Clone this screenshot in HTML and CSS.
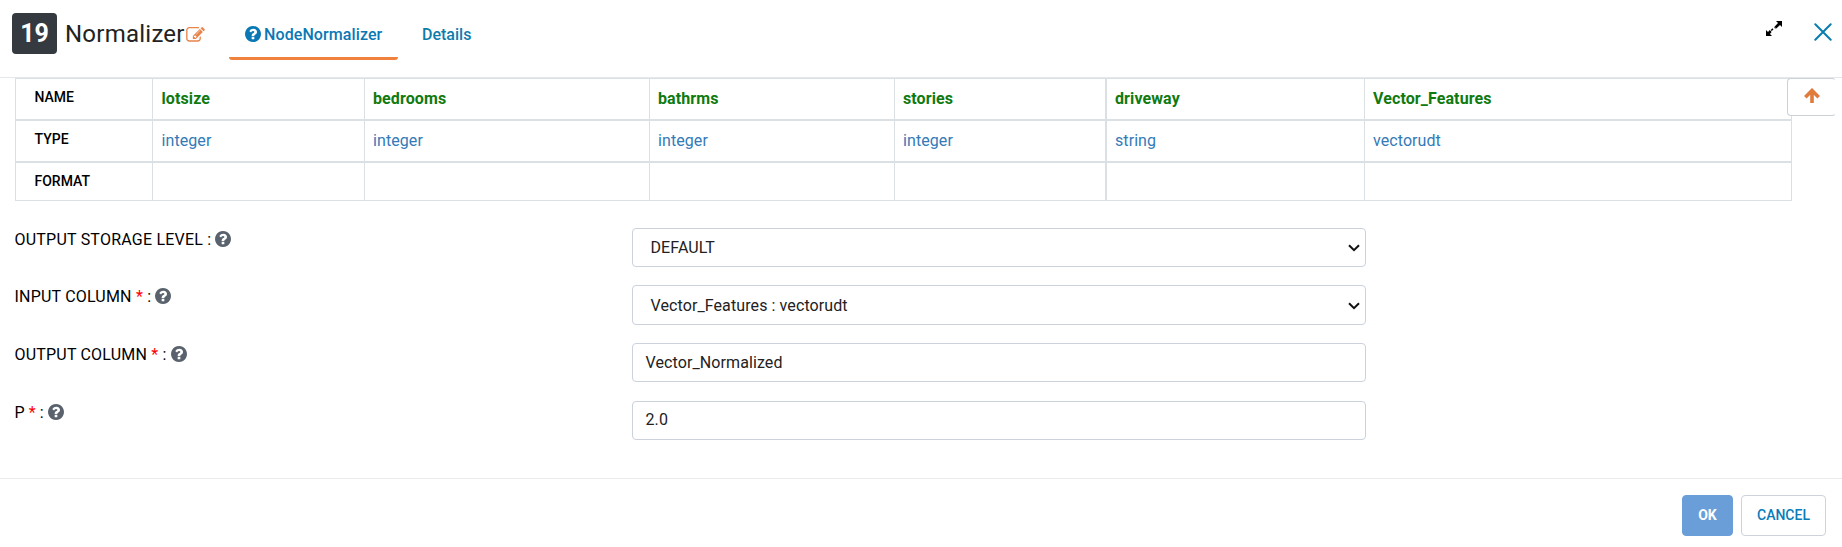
FILE: index.html
```html
<!DOCTYPE html>
<html lang="en">
<head>
<meta charset="utf-8">
<title>Normalizer</title>
<link rel="stylesheet" href="styles.css">
</head>
<body>
<svg class="defs" width="0" height="0" aria-hidden="true">
  <symbol id="help" viewBox="0 0 1536 1536"><path d="M896 1248v-192q0-14-9-23t-23-9H672q-14 0-23 9t-9 23v192q0 14 9 23t23 9h192q14 0 23-9t9-23zm256-672q0-88-55.500-163t-138.500-116-170-41q-243 0-371 213-15 24 8 42l132 100q7 6 19 6 16 0 25-12 53-68 86-92 34-24 86-24 48 0 85.500 26t37.500 59q0 38-20 61t-68 45q-63 28-115.500 86.500T640 892v36q0 14 9 23t23 9h192q14 0 23-9t9-23q0-19 21.500-49.500T972 829q32-18 49-28.500t46-35 44.500-48 28-60.500 12.500-81zm384 192q0 209-103 385.500T1153.500 1433 768 1536t-385.500-103T103 1153.500 0 768t103-385.500T382.500 103 768 0t385.500 103T1433 382.500 1536 768z"/></symbol>
</svg>
<header class="header">
  <span class="badge">19</span>
  <h1 class="title">Normalizer</h1>
  <svg class="edit" viewBox="0 0 1792 1536"><path d="M888 1056l116-116-152-152-116 116v56h96v96h56zm440-720q-16-16-33 1L945 687q-17 17-1 33t33-1l350-350q17-17 1-33zm80 594v190q0 119-84.500 203.500T1120 1408H288q-119 0-203.500-84.500T0 1120V288Q0 169 84.500 84.500T288 0h832q63 0 117 25 15 7 18 23 3 17-9 29l-49 49q-14 14-32 8-23-6-45-6H288q-66 0-113 47t-47 113v832q0 66 47 113t113 47h832q66 0 113-47t47-113V994q0-13 9-22l64-64q15-15 35-7t20 29zm-96-738l288 288-672 672H640V864zm444 132l-92 92-288-288 92-92q28-28 68-28t68 28l152 152q28 28 28 68t-28 68z"/></svg>
  <nav class="tabs">
    <a class="tab active"><svg class="help"><use href="#help"/></svg>NodeNormalizer</a>
    <a class="tab details">Details</a>
  </nav>
  <div class="tools">
    <svg class="expand" viewBox="0 0 16 15"><path d="M10 0h6v6l-2-2-3.700 3.500-1.800-1.800L12 2zM0 9l2 2 1.800-1.900 1.800 1.800L4 13l2 2H0z"/><path class="dash" d="M9.300 6.700 8.700 7.200M5.200 9.500 7 7.900"/></svg>
    <svg class="close" viewBox="0 0 18 18"><path d="M1.300 1.300 16.700 16.700M16.700 1.300 1.300 16.700"/></svg>
  </div>
</header>
<main class="body">
  <section class="schema">
    <div class="row">
      <div class="head">NAME</div><div class="name">lotsize</div><div class="name">bedrooms</div><div class="name">bathrms</div><div class="name">stories</div><div class="name wide">driveway</div><div class="name">Vector_Features</div>
    </div>
    <div class="row">
      <div class="head">TYPE</div><div class="type">integer</div><div class="type">integer</div><div class="type">integer</div><div class="type">integer</div><div class="type wide">string</div><div class="type">vectorudt</div>
    </div>
    <div class="row">
      <div class="head">FORMAT</div><div></div><div></div><div></div><div></div><div class="wide"></div><div></div>
    </div>
    <div class="up"><svg viewBox="0 0 16 15"><path d="M1.300 9.200 8 2.500l6.700 6.700M8 3v12"/></svg></div>
  </section>
  <section class="form">
    <div class="label first">OUTPUT STORAGE LEVEL :<svg class="help"><use href="#help"/></svg></div>
    <div class="control select">DEFAULT<svg class="chevron" viewBox="0 0 12 8"><path d="M1 1.200 6 6.200l5-5"/></svg></div>
    <div class="label">INPUT COLUMN <i>*</i> :<svg class="help"><use href="#help"/></svg></div>
    <div class="control select tall">Vector_Features : vectorudt<svg class="chevron" viewBox="0 0 12 8"><path d="M1 1.200 6 6.200l5-5"/></svg></div>
    <div class="label">OUTPUT COLUMN <i>*</i> :<svg class="help"><use href="#help"/></svg></div>
    <div class="control text">Vector_Normalized</div>
    <div class="label short">P <i>*</i> :<svg class="help"><use href="#help"/></svg></div>
    <div class="control">2.0</div>
  </section>
</main>
<footer class="footer">
  <div class="btn ok">OK</div>
  <div class="btn cancel">CANCEL</div>
</footer>
</body>
</html>
```
FILE: styles.css
```css
* { box-sizing: border-box; }
body {
  margin: 0;
  height: 547px;
  overflow: hidden;
  background: #fff;
  color: #222;
  font: 16px/24px Roboto, sans-serif;
  display: flex;
  flex-direction: column;
}
.defs { display: none; }
.header {
  height: 78px;
  flex: none;
  display: flex;
  align-items: flex-start;
  padding: 13px 10px 0 12px;
  border-bottom: 1px solid #e5e8eb;
}
.badge {
  width: 45px;
  height: 41px;
  border-radius: 4px;
  background: #343a40;
  color: #fff;
  font-size: 25px;
  font-weight: 700;
  line-height: 41px;
  text-align: center;
}
.title {
  margin: 0 0 0 8px;
  width: 121px;
  font-size: 24px;
  font-weight: 400;
  line-height: 42px;
  letter-spacing: 0.24px;
}
.edit { width: 19px; height: 16px; margin-top: 14px; fill: #e8834a; }
.tabs { display: flex; margin-left: 24px; }
.tab {
  display: flex;
  align-items: center;
  height: 47px;
  padding-bottom: 3px;
  color: #0a78b5;
  font-weight: 500;
}
.active {
  width: 169px;
  padding: 0 0 0 16px;
  border-bottom: 3px solid #f0813c;
  border-radius: 0 0 3px 3px;
  letter-spacing: 0.1px;
}
.details { margin-left: 24px; color: #0e7cab; }
.help { width: 16px; height: 16px; flex: none; fill: #5a636d; }
.tab .help { margin-right: 3px; margin-bottom: 2px; fill: #0a78b5; }
.tools { display: flex; margin-left: auto; }
.expand { width: 16px; height: 15px; margin: 8px 32px 0 0; }
.dash { stroke: #000; stroke-width: 1.500; }
.close { width: 18px; height: 18px; margin-top: 10px; fill: none; stroke: #0a7cb0; stroke-width: 2; stroke-linecap: round; }
.body { flex: 1; }
.schema { position: relative; width: 1777px; margin-left: 15px; border: 1px solid #dbe0e5; }
.row {
  display: grid;
  grid-template-columns: 136px 212px 285px 245px 211px 259px 1fr;
  height: 42px;
  border-bottom: 2px solid #dbe0e5;
}
.row:nth-child(3) { height: 37px; border: 0; }
.row > div { border-left: 1px solid #dbe0e5; padding: 8px 0 0 8px; }
.row > div:nth-child(2) { padding-left: 8.500px; }
.row > .head { border: 0; padding: 6px 0 0 18.500px; font-size: 14px; font-weight: 500; color: #000; }
.row > .wide { border-left-width: 2px; }
.row > .name { color: #0f7a0f; font-weight: 700; letter-spacing: 0.1px; }
.row > .type { color: #337ab7; letter-spacing: 0.08px; }
.up {
  position: absolute;
  left: 1771px;
  top: -1px;
  width: 49px;
  height: 38px;
  padding: 9px 0 0 16px;
  border: 1px solid #ccd2d8;
  border-right-color: transparent;
  border-radius: 4px;
  background: #fff;
}
.up svg { display: block; width: 16px; height: 15px; fill: none; stroke: #e07b3e; stroke-width: 3.600; }
.form {
  display: grid;
  grid-template-columns: 617px 734px;
  grid-template-rows: 57px 58px 58px 58px;
  padding: 27px 0 0 15px;
}
.label { display: flex; align-items: flex-start; height: 24px; margin-left: -0.500px; white-space: pre; color: #000; letter-spacing: 0.2px; }
.first { letter-spacing: 0.22px; }
.short { letter-spacing: 0.1px; }
.label i { color: #f00; font-style: normal; }
.label .help { margin: 3px 0 0 4px; }
.control {
  height: 39px;
  border: 1px solid #ccd2dc;
  border-radius: 4px;
  padding: 6px 12px 0 12.500px;
  letter-spacing: 0.1px;
}
.text { padding-top: 7px; }
.select { display: flex; align-items: center; justify-content: space-between; padding: 0 5px 0 17.500px; letter-spacing: 0.1px; }
.tall { height: 40px; padding-top: 1px; }
.chevron { width: 12px; height: 8px; fill: none; stroke: #111; stroke-width: 2; }
.footer {
  display: flex;
  justify-content: flex-end;
  gap: 8px;
  height: 69px;
  flex: none;
  padding: 16px 16px 0 0;
  border-top: 1px solid #e8eaec;
}
.btn { height: 41px; border-radius: 4px; font-size: 14px; font-weight: 500; line-height: 39px; text-align: center; border: 1px solid #ced2da; }
.ok { width: 51px; background: #699ed8; border-color: #699ed8; color: #fff; font-weight: 700; }
.cancel { width: 85px; color: #0a7cb8; }
```
